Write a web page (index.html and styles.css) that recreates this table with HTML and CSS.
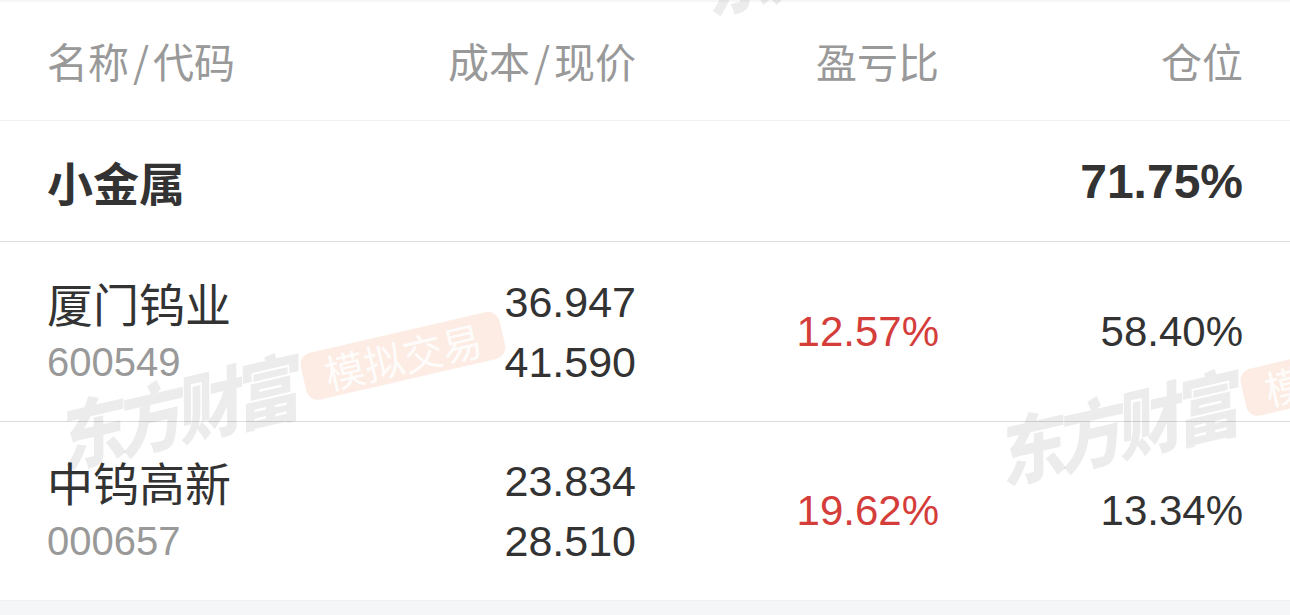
FILE: index.html
```html
<!DOCTYPE html>
<html lang="zh-CN">
<head>
<meta charset="UTF-8">
<meta name="viewport" content="width=device-width, initial-scale=1.0">
<title>模拟交易 持仓</title>
<link rel="stylesheet" href="styles.css">
</head>
<body>
<div class="page">
    <div class="holdings">
        <div class="row head">
            <div class="cell name">名称<span class="slash">/</span>代码</div>
            <div class="cell">成本<span class="slash">/</span>现价</div>
            <div class="cell">盈亏比</div>
            <div class="cell">仓位</div>
        </div>

        <div class="row group">
            <div class="cell name">小金属</div>
            <div class="cell"></div>
            <div class="cell"></div>
            <div class="cell">71.75%</div>
        </div>

        <div class="row stock">
            <div class="cell name">
                <div class="stock-name">厦门钨业</div>
                <div class="stock-code">600549</div>
            </div>
            <div class="cell price">
                <div>36.947</div>
                <div>41.590</div>
            </div>
            <div class="cell num up">12.57%</div>
            <div class="cell num">58.40%</div>
        </div>

        <div class="row stock last">
            <div class="cell name">
                <div class="stock-name">中钨高新</div>
                <div class="stock-code">000657</div>
            </div>
            <div class="cell price">
                <div>23.834</div>
                <div>28.510</div>
            </div>
            <div class="cell num up">19.62%</div>
            <div class="cell num">13.34%</div>
        </div>
    </div>

    <!-- watermark tiles laid over the list -->
    <div class="watermark">
        <div class="mark" style="left: 50px; top: 346px;"><span class="mark-brand">东方财富</span><span class="mark-tag">模拟交易</span></div>
        <div class="mark" style="left: 990px; top: 362px;"><span class="mark-brand">东方财富</span><span class="mark-tag">模拟交易</span></div>
        <div class="mark" style="left: 696px; top: -108px;"><span class="mark-brand">东方财富</span><span class="mark-tag">模拟交易</span></div>
    </div>
</div>
</body>
</html>
```

FILE: styles.css
```css
body {
    margin: 0;
    padding: 0;
    background-color: #f5f6f8;
    font-family: "Liberation Sans", "Noto Sans CJK SC", sans-serif;
    color: #333;
}
.page {
    position: relative;
    width: 1290px;
    height: 615px;
    overflow: hidden;
    padding-top: 2px;
    box-sizing: border-box;
}
.holdings {
    background-color: #fff;
}
.row {
    display: grid;
    grid-template-columns: 290px 299px 303px 304px;
    align-items: center;
    padding: 0 47px;
    border-bottom: 1px solid #dcdcdc;
}
.cell {
    text-align: right;
}
.cell.name {
    text-align: left;
}
.head {
    height: 119px;
    border-bottom-color: #f0f0f0;
    font-family: "Noto Sans CJK SC", sans-serif;
    font-size: 41px;
    color: #999;
    padding-bottom: 3px;
    box-sizing: border-box;
}
.head .slash {
    margin: 0 4px;
}
.group {
    height: 120px;
    font-size: 48px;
    font-weight: bold;
}
.group .name {
    font-family: "Noto Sans CJK SC", sans-serif;
    font-size: 46px;
}
.stock {
    height: 179px;
}
.stock.last {
    height: 178px;
    border-bottom-color: #eef0f3;
}
.stock-name {
    font-family: "Noto Sans CJK SC", sans-serif;
    font-size: 46px;
    line-height: 60px;
    color: #333;
}
.stock-code {
    font-size: 40px;
    line-height: 60px;
    color: #999;
}
.price {
    font-size: 43px;
    line-height: 60px;
}
.num {
    font-size: 42px;
}
.up {
    color: #d43d3a;
}
.watermark {
    position: absolute;
    inset: 0;
    pointer-events: none;
}
.mark {
    position: absolute;
    display: flex;
    align-items: center;
    gap: 14px;
    width: 470px;
    height: 74px;
    transform: rotate(-13deg);
    font-family: "Noto Sans CJK SC", sans-serif;
}
.mark-brand {
    display: inline-block;
    font-size: 66px;
    line-height: 74px;
    font-weight: 900;
    font-style: italic;
    letter-spacing: -6px;
    transform: scaleY(1.12);
    color: rgba(0, 0, 0, 0.075);
}
.mark-tag {
    background-color: rgba(232, 110, 50, 0.13);
    color: rgba(255, 255, 255, 0.85);
    font-size: 40px;
    line-height: 48px;
    padding: 0 22px;
    border-radius: 12px;
}
```
